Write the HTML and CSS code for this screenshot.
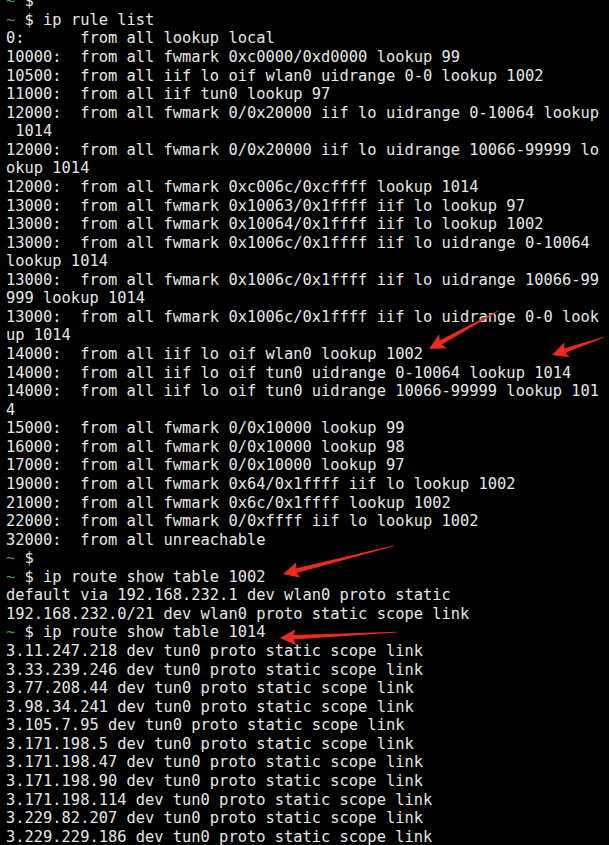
FILE: index.html
```html
<!DOCTYPE html>
<html>
<head>
<meta charset="utf-8">
<link rel="stylesheet" href="styles.css">
</head>
<body>
<div class="term">
<pre class="out"><span class="p">~</span> $
<span class="p">~</span> $ ip rule list
0:      from all lookup local
10000:  from all fwmark 0xc0000/0xd0000 lookup 99
10500:  from all iif lo oif wlan0 uidrange 0-0 lookup 1002
11000:  from all iif tun0 lookup 97
12000:  from all fwmark 0/0x20000 iif lo uidrange 0-10064 lookup
 1014
12000:  from all fwmark 0/0x20000 iif lo uidrange 10066-99999 lo
okup 1014
12000:  from all fwmark 0xc006c/0xcffff lookup 1014
13000:  from all fwmark 0x10063/0x1ffff iif lo lookup 97
13000:  from all fwmark 0x10064/0x1ffff iif lo lookup 1002
13000:  from all fwmark 0x1006c/0x1ffff iif lo uidrange 0-10064
lookup 1014
13000:  from all fwmark 0x1006c/0x1ffff iif lo uidrange 10066-99
999 lookup 1014
13000:  from all fwmark 0x1006c/0x1ffff iif lo uidrange 0-0 look
up 1014
14000:  from all iif lo oif wlan0 lookup 1002
14000:  from all iif lo oif tun0 uidrange 0-10064 lookup 1014
14000:  from all iif lo oif tun0 uidrange 10066-99999 lookup 101
4
15000:  from all fwmark 0/0x10000 lookup 99
16000:  from all fwmark 0/0x10000 lookup 98
17000:  from all fwmark 0/0x10000 lookup 97
19000:  from all fwmark 0x64/0x1ffff iif lo lookup 1002
21000:  from all fwmark 0x6c/0x1ffff lookup 1002
22000:  from all fwmark 0/0xffff iif lo lookup 1002
32000:  from all unreachable
<span class="p">~</span> $
<span class="p">~</span> $ ip route show table 1002
default via 192.168.232.1 dev wlan0 proto static
192.168.232.0/21 dev wlan0 proto static scope link
<span class="p">~</span> $ ip route show table 1014
3.11.247.218 dev tun0 proto static scope link
3.33.239.246 dev tun0 proto static scope link
3.77.208.44 dev tun0 proto static scope link
3.98.34.241 dev tun0 proto static scope link
3.105.7.95 dev tun0 proto static scope link
3.171.198.5 dev tun0 proto static scope link
3.171.198.47 dev tun0 proto static scope link
3.171.198.90 dev tun0 proto static scope link
3.171.198.114 dev tun0 proto static scope link
3.229.82.207 dev tun0 proto static scope link
3.229.229.186 dev tun0 proto static scope link</pre>
<svg class="marks" width="609" height="845" viewBox="0 0 609 845">
  <g fill="#ee2a1e">
    <polygon transform="translate(429,349) rotate(151.2)" points="0,0 -16,-8 -13.5,-2.3 -79,-0.4 -79,0.4 -13.5,2.3 -16,8"/>
    <polygon transform="translate(552,355) rotate(160.9)" points="0,0 -16,-8 -13.5,-2.3 -55,-0.4 -55,0.4 -13.5,2.3 -16,8"/>
    <polygon transform="translate(283,574) rotate(165.7)" points="0,0 -16,-8 -13.5,-2.3 -114,-0.4 -114,0.4 -13.5,2.3 -16,8"/>
    <polygon transform="translate(280,638) rotate(177.1)" points="0,0 -16,-8 -13.5,-2.3 -117,-0.4 -117,0.4 -13.5,2.3 -16,8"/>
  </g>
</svg>
</div>
</body>
</html>
```

FILE: styles.css
```css
html, body {
  margin: 0;
  padding: 0;
  background: #000;
  overflow: hidden;
}
.term {
  position: relative;
  width: 609px;
  height: 845px;
  overflow: hidden;
  background: #000;
}
.out {
  margin: -7.7px 0 0 0;
  padding: 0 0 0 6px;
  font-family: "DejaVu Sans Mono", monospace;
  font-size: 15.4px;
  line-height: 18.56px;
  color: #e6e6e6;
  white-space: pre;
}
.p {
  color: #469646;
}
.marks {
  position: absolute;
  left: 0;
  top: 0;
}
```
